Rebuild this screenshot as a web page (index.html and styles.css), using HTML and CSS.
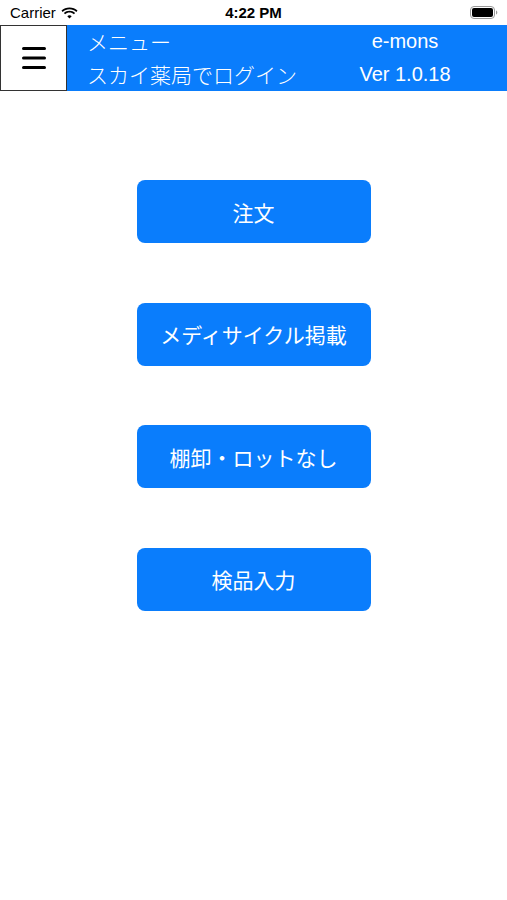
FILE: index.html
```html
<!DOCTYPE html>
<html lang="ja">
<head>
    <meta charset="UTF-8">
    <meta name="viewport" content="width=device-width, initial-scale=1.0">
    <title>メニュー</title>
    <link rel="stylesheet" href="styles.css">
</head>
<body>
    <div class="status-bar">
        <div class="carrier">
            Carrier
            <svg class="wifi" width="17" height="12" viewBox="0 0 17 12">
                <path d="M8.5 2.2c2.6 0 5 1 6.8 2.7l1.2-1.3C14.4 1.5 11.6.4 8.5.4S2.6 1.5.5 3.6l1.2 1.3C3.5 3.2 5.9 2.2 8.5 2.2z" fill="#000"/>
                <path d="M8.5 5.6c1.7 0 3.2.6 4.4 1.7l1.2-1.3C12.6 4.6 10.6 3.8 8.5 3.8S4.4 4.6 2.9 6l1.2 1.3c1.2-1.1 2.7-1.7 4.4-1.7z" fill="#000"/>
                <path d="M8.5 11.6l2.2-2.4c-.6-.5-1.4-.9-2.2-.9s-1.6.4-2.2.9z" fill="#000"/>
            </svg>
        </div>
        <div class="time">4:22 PM</div>
        <div class="battery">
            <svg width="28" height="13" viewBox="0 0 28 13">
                <rect x="0.5" y="0.5" width="24" height="12" rx="3.5" fill="none" stroke="#999" stroke-width="1"/>
                <rect x="2" y="2" width="21" height="9" rx="2" fill="#000"/>
                <path d="M26 4.5v4c.8-.3 1.3-1.1 1.3-2s-.5-1.7-1.3-2z" fill="#999"/>
            </svg>
        </div>
    </div>

    <header class="header">
        <div class="menu-button">
            <svg width="24" height="24" viewBox="0 0 24 24">
                <rect x="0" y="1" width="24" height="3" rx="1.5" fill="#000"/>
                <rect x="0" y="10.5" width="24" height="3" rx="1.5" fill="#000"/>
                <rect x="0" y="20" width="24" height="3" rx="1.5" fill="#000"/>
            </svg>
        </div>
        <div class="header-title">
            <div class="line">メニュー</div>
            <div class="line">スカイ薬局でログイン</div>
        </div>
        <div class="header-app">
            <div class="line">e-mons</div>
            <div class="line">Ver 1.0.18</div>
        </div>
    </header>

    <main class="menu">
        <button class="menu-item">注文</button>
        <button class="menu-item">メディサイクル掲載</button>
        <button class="menu-item">棚卸・ロットなし</button>
        <button class="menu-item">検品入力</button>
    </main>
</body>
</html>
```

FILE: styles.css
```css
/* Menu screen */
body {
    margin: 0;
    padding: 0;
    width: 507px;
    height: 900px;
    background-color: #ffffff;
    font-family: "Noto Sans CJK JP", "Noto Sans", sans-serif;
}

.status-bar {
    height: 25px;
    display: flex;
    align-items: center;
    justify-content: space-between;
    padding: 0 9px 0 10px;
    font-family: "Liberation Sans", Arial, sans-serif;
    font-size: 15px;
    color: #000;
    position: relative;
}
.carrier {
    display: flex;
    align-items: center;
    gap: 5px;
}
.time {
    position: absolute;
    left: 0;
    right: 0;
    text-align: center;
    font-weight: bold;
}
.battery {
    display: flex;
    align-items: center;
}

.header {
    height: 66px;
    background-color: #0a7dfc;
    display: flex;
    color: #ffffff;
}
.menu-button {
    width: 65px;
    background-color: #ffffff;
    border: 1px solid #333;
    display: flex;
    align-items: center;
    justify-content: center;
}
.header-title {
    padding-left: 20px;
    flex: 1;
}
.header-app {
    width: 92px;
    margin-right: 56px;
    text-align: center;
    font-family: "Liberation Sans", Arial, sans-serif;
}
.line {
    height: 33px;
    line-height: 32px;
    font-size: 21px;
    white-space: nowrap;
}
.header-title .line {
    font-weight: 300;
}
.header-app .line {
    font-size: 20px;
}

.menu {
    display: flex;
    flex-direction: column;
    align-items: center;
    gap: 59.5px;
    padding-top: 89px;
}
.menu-item {
    width: 234px;
    height: 63px;
    background-color: #0a7dfc;
    color: #ffffff;
    border: none;
    border-radius: 8px;
    font-family: "Noto Sans CJK JP", "Noto Sans", sans-serif;
    font-size: 21px;
    font-weight: 400;
    padding: 0;
}
```
